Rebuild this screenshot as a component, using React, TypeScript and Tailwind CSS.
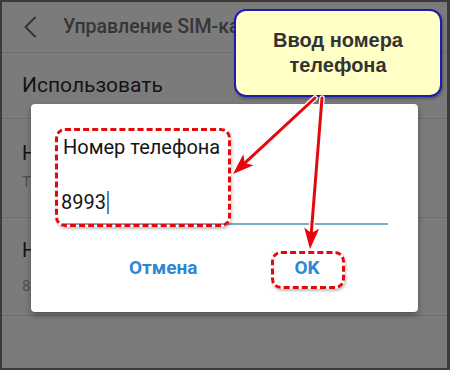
import React from 'react';

const RED = '#e3080c';

// arrow from (x1,y1) to tip (x2,y2), with a notched head
function Arrow({ x1, y1, x2, y2 }: { x1: number; y1: number; x2: number; y2: number }) {
  const dx = x2 - x1;
  const dy = y2 - y1;
  const len = Math.hypot(dx, dy);
  const ux = dx / len;
  const uy = dy / len;
  const px = -uy;
  const py = ux;
  const head = 21;
  const half = 7.5;
  const bx = x2 - ux * head;
  const by = y2 - uy * head;
  const nx = x2 - ux * (head - 5);
  const ny = y2 - uy * (head - 5);
  const pts = `${x2},${y2} ${bx + px * half},${by + py * half} ${nx},${ny} ${bx - px * half},${by - py * half}`;
  return (
    <g>
      <line x1={x1} y1={y1} x2={nx} y2={ny} stroke="#fff" strokeWidth={5.5} strokeLinecap="round" />
      <polygon points={pts} fill="#fff" stroke="#fff" strokeWidth={2.5} strokeLinejoin="round" />
      <line x1={x1} y1={y1} x2={nx} y2={ny} stroke={RED} strokeWidth={3} strokeLinecap="round" />
      <polygon points={pts} fill={RED} />
    </g>
  );
}

export default function App() {
  return (
    <div className="relative w-[450px] h-[370px] overflow-hidden" style={{ fontFamily: 'Roboto, "Noto Sans", sans-serif' }}>
      {/* dimmed settings screen */}
      <div className="w-full h-full bg-[#7b7b7b] border-l-2 border-t-2 border-r-[3px] border-b-2 border-[#3b3b3b] flex flex-col">
        <div className="h-[51px] shrink-0 flex items-center pl-[21px] border-b border-[#6d6d6d]">
          <svg width="14" height="22" viewBox="0 0 14 22" fill="none">
            <path d="M12 1.5 L2.5 11 L12 20.5" stroke="#333" strokeWidth="2" strokeLinecap="round" strokeLinejoin="round" />
          </svg>
          <span className="ml-[26px] text-[19.5px] font-medium text-[#363636] whitespace-nowrap">Управление SIM-картами</span>
        </div>
        <div className="h-[66px] shrink-0 flex items-center pl-[20px] border-b border-[#6d6d6d]">
          <span className="text-[21px] text-[#141414]">Использовать</span>
        </div>
        {/* rows partly hidden behind the dialog */}
        <div className="h-[99px] shrink-0 pl-[20px] pt-[22px] border-b border-[#6d6d6d]">
          <div className="w-[11px] overflow-hidden whitespace-nowrap text-[20px] leading-[24px] text-[#141414]">Название SIM-карты</div>
          <div className="w-[11px] overflow-hidden whitespace-nowrap mt-[7px] text-[15px] leading-[20px] text-[#4f4f4f]">Tele2</div>
        </div>
        <div className="h-[98px] shrink-0 pl-[20px] pt-[20px] border-b border-[#6d6d6d]">
          <div className="w-[11px] overflow-hidden whitespace-nowrap text-[20px] leading-[24px] text-[#141414]">Номер телефона</div>
          <div className="w-[11px] overflow-hidden whitespace-nowrap mt-[14px] text-[15px] leading-[20px] text-[#4f4f4f]">89930000000</div>
        </div>
      </div>

      {/* dialog */}
      <div className="absolute left-[31px] top-[104px] w-[387px] h-[208px] bg-white rounded-[4px] shadow-[0_3px_6px_rgba(0,0,0,0.35)]">
        <div className="pl-[32px] pt-[31px] text-[20px] leading-[24px] text-[#151515]">Номер телефона</div>
        <div className="pl-[30px] mt-[31px] flex items-center h-[24px] text-[20px] text-[#151515]">
          <span>8993</span>
          <span className="ml-[1px] w-[2px] h-[23px] bg-[#3d8fd0]" />
        </div>
        <div className="ml-[32px] mt-[9px] w-[325px] h-[2px] bg-[#7aaccc]" />
        <div className="flex items-center pl-[98px] mt-[31px] text-[19px] font-bold text-[#2f87d3] leading-[24px]">
          <span>Отмена</span>
          <span className="ml-[97px]">OK</span>
        </div>
      </div>

      {/* red dashed highlights */}
      <div className="absolute left-[55px] top-[128px] w-[176px] h-[99px] border-[3px] border-dashed border-[#e3080c] rounded-[10px] shadow-[1px_2px_3px_rgba(0,0,0,0.25)]" />
      <div className="absolute left-[271px] top-[251px] w-[74px] h-[38px] border-[3px] border-dashed border-[#e3080c] rounded-[10px] shadow-[1px_2px_3px_rgba(0,0,0,0.25)]" />

      {/* callout */}
      <div
        className="absolute left-[234px] top-[9px] w-[208px] h-[88px] bg-[#ffffc6] border-2 border-[#1c1cb4] rounded-[12px] flex flex-col items-center justify-center text-[20px] leading-[25px] font-bold text-[#333] shadow-[1px_2px_3px_rgba(0,0,0,0.3)]"
        style={{ fontFamily: '"Liberation Sans", Arial, sans-serif' }}
      >
        <span>Ввод номера</span>
        <span>телефона</span>
      </div>

      {/* arrows */}
      <svg className="absolute left-0 top-0 pointer-events-none" width="450" height="370" viewBox="0 0 450 370">
        <Arrow x1={315} y1={98} x2={233} y2={174} />
        <Arrow x1={322} y1={98} x2={310} y2={249} />
      </svg>
    </div>
  );
}
